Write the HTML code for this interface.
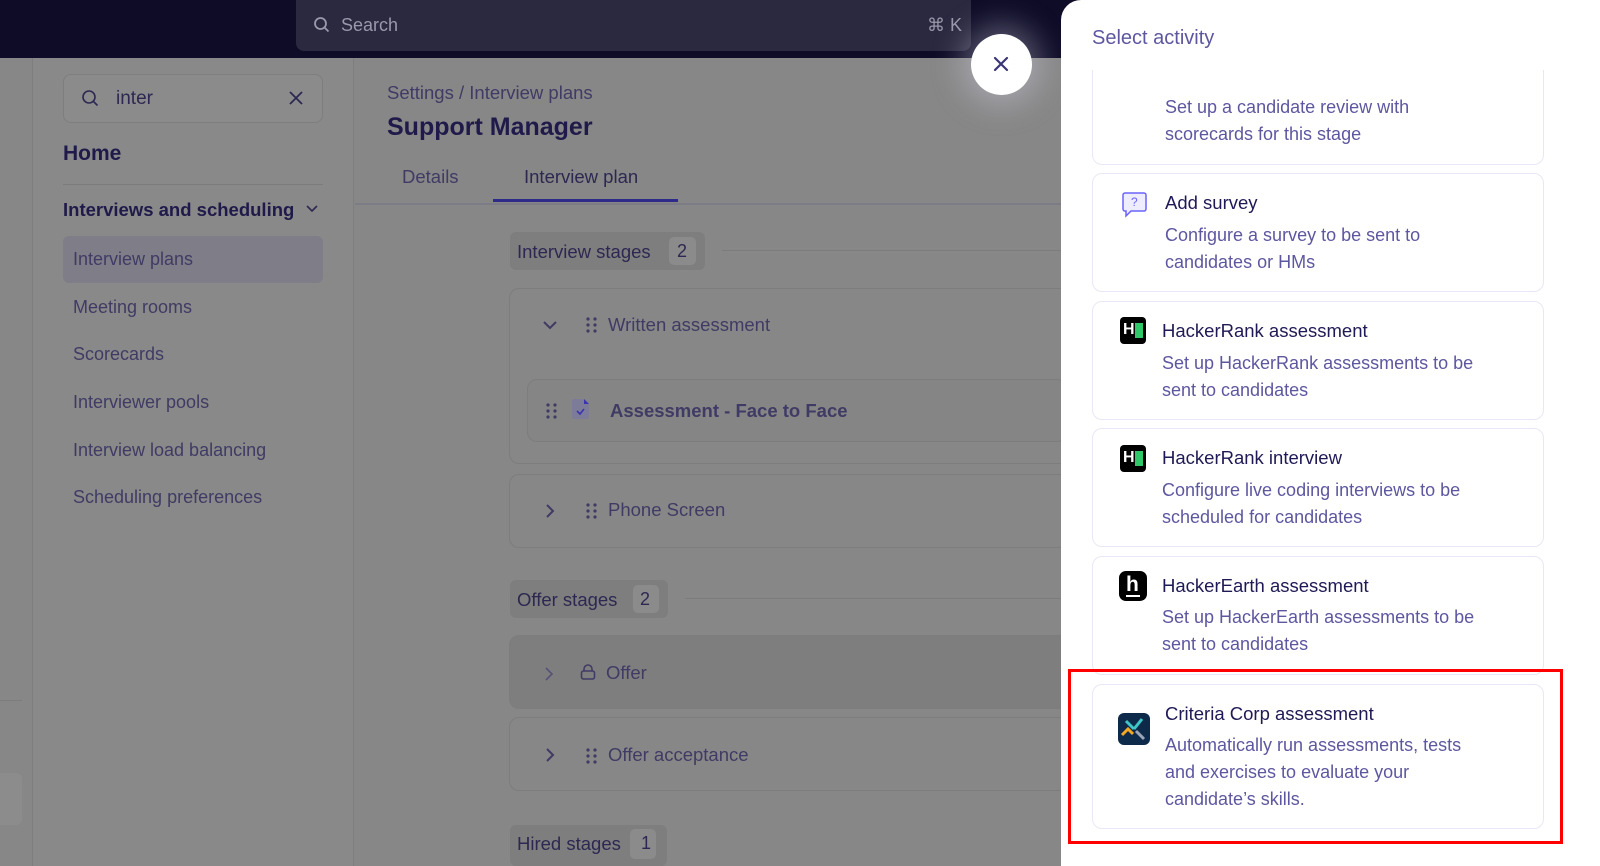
<!DOCTYPE html><html><head><style>
*{box-sizing:border-box;margin:0;padding:0}
body{width:1600px;height:866px;overflow:hidden;position:relative;background:#878787;font-family:"Liberation Sans",sans-serif}
.a{position:absolute}
.top{left:0;top:0;width:1600px;height:58px;background:#0e0c26}
.search{left:296px;top:0;width:675px;height:51px;background:#2b2940;border-radius:0 0 8px 8px;color:#9a98aa;font-size:18px}
.sb{left:32px;top:58px;width:322px;height:808px;background:#898989;border-left:1px solid #7e7e7e;border-right:1px solid #7e7e7e}
.txt{color:#2c2852}
.nav{left:73px;font-size:18px;color:#3f3b64}
.card{position:absolute;left:1092px;width:452px;background:#fff;border:1px solid #e9e7f6;border-radius:10px}
.t{position:absolute;font-size:18.5px;color:#1f1a55}
.d{position:absolute;font-size:18px;color:#5d57a0;line-height:27px}
.row{position:absolute;left:509px;width:560px;border:1px solid #7d7d7d;border-radius:10px}
</style></head><body>
<svg width="0" height="0" style="position:absolute"><defs>
<g id="dots" fill="#3f3b64"><circle cx="2" cy="2" r="1.6"/><circle cx="9" cy="2" r="1.6"/><circle cx="2" cy="8" r="1.6"/><circle cx="9" cy="8" r="1.6"/><circle cx="2" cy="14" r="1.6"/><circle cx="9" cy="14" r="1.6"/></g>
</defs></svg>
<div class="a top"></div>
<div class="a search"><svg class="a" style="left:17px;top:16px" width="18" height="18" viewBox="0 0 18 18"><circle cx="7.5" cy="7.5" r="5.5" fill="none" stroke="#9a98aa" stroke-width="1.8"/><path d="M11.5 11.5l4 4" stroke="#9a98aa" stroke-width="1.8"/></svg><span class="a" style="left:45px;top:15px">Search</span><span class="a" style="left:631px;top:15px">⌘ K</span></div>
<div class="a sb"></div>
<div class="a" style="left:63px;top:74px;width:260px;height:49px;border:1px solid #7e7e7e;border-radius:8px;background:#8b8b8b"></div>
<svg class="a" style="left:80px;top:88px" width="20" height="20"><circle cx="9" cy="9" r="6" fill="none" stroke="#2c2852" stroke-width="1.6"/><path d="M13.5 13.5l4 4" stroke="#2c2852" stroke-width="1.6"/></svg>
<span class="a txt" style="left:116px;top:88px;font-size:19px">inter</span>
<svg class="a" style="left:288px;top:90px" width="16" height="16"><path d="M2 2l12 12M14 2L2 14" stroke="#2c2852" stroke-width="1.8"/></svg>
<span class="a" style="left:63px;top:142px;font-size:21px;font-weight:bold;color:#1f1a4a">Home</span>
<div class="a" style="left:63px;top:184px;width:260px;height:1px;background:#7c7c7c"></div>
<span class="a" style="left:63px;top:199px;font-size:18.5px;font-weight:bold;color:#1f1a4a">Interviews and scheduling</span>
<svg class="a" style="left:306px;top:205px" width="12" height="8"><path d="M1 1l5 5 5-5" stroke="#2c2852" stroke-width="1.6" fill="none"/></svg>
<div class="a" style="left:63px;top:236px;width:260px;height:47px;background:#7f7e88;border-radius:6px"></div>
<span class="a nav" style="top:249px">Interview plans</span>
<span class="a nav" style="top:297px">Meeting rooms</span>
<span class="a nav" style="top:344px">Scorecards</span>
<span class="a nav" style="top:392px">Interviewer pools</span>
<span class="a nav" style="top:440px">Interview load balancing</span>
<span class="a nav" style="top:487px">Scheduling preferences</span>
<span class="a" style="left:387px;top:82px;font-size:18.5px;color:#3f3b64">Settings / Interview plans</span>
<span class="a" style="left:387px;top:113px;font-size:25px;font-weight:bold;color:#1f1a4a">Support Manager</span>
<span class="a" style="left:402px;top:166px;font-size:18.5px;color:#3f3b64">Details</span>
<span class="a" style="left:524px;top:166px;font-size:18.5px;color:#2c2852">Interview plan</span>
<div class="a" style="left:355px;top:203px;width:706px;height:2px;background:#7c7c86"></div>
<div class="a" style="left:493px;top:199px;width:185px;height:3px;background:#2e2a8a"></div>
<div class="a" style="left:510px;top:232px;width:195px;height:38px;background:#7e7e7e;border-radius:6px"></div>
<span class="a txt" style="left:517px;top:241px;font-size:18.5px">Interview stages</span>
<div class="a" style="left:669px;top:237px;width:27px;height:28px;background:#8b8b8b;border-radius:5px"></div><span class="a txt" style="left:677px;top:241px;font-size:18px">2</span>
<div class="a" style="left:722px;top:250px;width:340px;height:1px;background:#7c7c7c"></div>
<div class="row" style="top:288px;height:176px"></div>
<svg class="a" style="left:543px;top:321px" width="14" height="9"><path d="M1 1l6 6 6-6" stroke="#3f3b64" stroke-width="2" fill="none"/></svg>
<svg class="a" style="left:586px;top:317px" width="11" height="16"><use href="#dots"/></svg>
<span class="a" style="left:608px;top:314px;font-size:18.5px;color:#3f3b64">Written assessment</span>
<div class="a" style="left:527px;top:379px;width:540px;height:63px;border:1px solid #7d7d7d;border-radius:10px;background:#858585"></div>
<svg class="a" style="left:546px;top:403px" width="11" height="16"><use href="#dots"/></svg>
<svg class="a" style="left:571px;top:397px" width="20" height="24"><path d="M3 2h10l5 5v13a2 2 0 0 1-2 2H3a2 2 0 0 1-2-2V4a2 2 0 0 1 2-2z" fill="#7d7c98"/><path d="M13 2l5 5h-5z" fill="#3a34b0"/><path d="M6 14l3 3 4-5" stroke="#3a34b0" stroke-width="1.6" fill="none"/></svg>
<span class="a" style="left:610px;top:400px;font-size:18.5px;font-weight:bold;color:#3f3b64">Assessment - Face to Face</span>
<div class="row" style="top:474px;height:74px"></div>
<svg class="a" style="left:546px;top:504px" width="9" height="14"><path d="M1 1l6 6-6 6" stroke="#3f3b64" stroke-width="2" fill="none"/></svg>
<svg class="a" style="left:586px;top:503px" width="11" height="16"><use href="#dots"/></svg>
<span class="a" style="left:608px;top:499px;font-size:18.5px;color:#3f3b64">Phone Screen</span>
<div class="a" style="left:510px;top:580px;width:158px;height:38px;background:#7e7e7e;border-radius:6px"></div>
<span class="a txt" style="left:517px;top:589px;font-size:18.5px">Offer stages</span>
<div class="a" style="left:633px;top:585px;width:26px;height:28px;background:#8b8b8b;border-radius:5px"></div><span class="a txt" style="left:640px;top:589px;font-size:18px">2</span>
<div class="a" style="left:685px;top:598px;width:376px;height:1px;background:#7c7c7c"></div>
<div class="row" style="top:635px;height:74px;background:#7e7e7e"></div>
<svg class="a" style="left:545px;top:667px" width="9" height="14"><path d="M1 1l6 6-6 6" stroke="#55527a" stroke-width="1.6" fill="none"/></svg>
<svg class="a" style="left:580px;top:663px" width="16" height="18"><path d="M4 8V6a4 4 0 0 1 8 0v2" stroke="#3f3b64" stroke-width="1.6" fill="none"/><rect x="1.5" y="8" width="13" height="8" rx="2" stroke="#3f3b64" stroke-width="1.6" fill="none"/></svg>
<span class="a" style="left:606px;top:662px;font-size:18.5px;color:#3f3b64">Offer</span>
<div class="row" style="top:717px;height:74px"></div>
<svg class="a" style="left:546px;top:748px" width="9" height="14"><path d="M1 1l6 6-6 6" stroke="#3f3b64" stroke-width="2" fill="none"/></svg>
<svg class="a" style="left:586px;top:748px" width="11" height="16"><use href="#dots"/></svg>
<span class="a" style="left:608px;top:744px;font-size:18.5px;color:#3f3b64">Offer acceptance</span>
<div class="a" style="left:510px;top:825px;width:157px;height:41px;background:#7e7e7e;border-radius:6px"></div>
<span class="a txt" style="left:517px;top:833px;font-size:18.5px">Hired stages</span>
<div class="a" style="left:630px;top:829px;width:26px;height:30px;background:#8b8b8b;border-radius:5px"></div><span class="a txt" style="left:641px;top:833px;font-size:18px">1</span>
<div class="a" style="left:0;top:700px;width:22px;height:1px;background:#7c7c7c"></div>
<div class="a" style="left:0;top:773px;width:22px;height:52px;background:#8c8c8c;border-radius:0 6px 6px 0"></div>
<div class="a" style="left:971px;top:34px;width:61px;height:61px;border-radius:50%;background:#fff;box-shadow:0 0 30px 10px rgba(220,220,240,.35)"></div>
<svg class="a" style="left:992px;top:55px" width="18" height="18"><path d="M3 3l12 12M15 3L3 15" stroke="#3a3578" stroke-width="2.2" stroke-linecap="round"/></svg>
<div class="a" style="left:1061px;top:0;width:539px;height:866px;background:#fff;border-radius:20px 0 0 0"></div>
<span class="a" style="left:1092px;top:27px;font-size:20px;color:#5d57a0">Select activity</span>
<div class="card" style="top:70px;height:95px;border-top:none;border-radius:0 0 10px 10px"></div>
<div class="d" style="left:1165px;top:94px">Set up a candidate review with<br>scorecards for this stage</div>
<div class="card" style="top:173px;height:119px"></div>
<svg class="a" style="left:1121px;top:191px" width="27" height="28" viewBox="0 0 27 28"><path d="M4 2h19a2 2 0 0 1 2 2v14a2 2 0 0 1-2 2H10l-5 5v-5H4a2 2 0 0 1-2-2V4a2 2 0 0 1 2-2z" fill="#eeecff" stroke="#6b63ff" stroke-width="1.5"/><text x="10" y="15" font-size="12" fill="#6b63ff" font-family="Liberation Sans">?</text></svg>
<div class="t" style="left:1165px;top:192px">Add survey</div>
<div class="d" style="left:1165px;top:222px">Configure a survey to be sent to<br>candidates or HMs</div>
<div class="card" style="top:301px;height:119px"></div>
<div class="a" style="left:1120px;top:317px;width:26px;height:27px;background:#000;border-radius:4px"><span class="a" style="left:3px;top:4px;color:#fff;font-weight:bold;font-size:16px">H</span><div class="a" style="left:15px;top:6px;width:8px;height:15px;background:#2ec866"></div></div>
<div class="t" style="left:1162px;top:320px">HackerRank assessment</div>
<div class="d" style="left:1162px;top:350px">Set up HackerRank assessments to be<br>sent to candidates</div>
<div class="card" style="top:428px;height:119px"></div>
<div class="a" style="left:1120px;top:445px;width:26px;height:27px;background:#000;border-radius:4px"><span class="a" style="left:3px;top:4px;color:#fff;font-weight:bold;font-size:16px">H</span><div class="a" style="left:15px;top:6px;width:8px;height:15px;background:#2ec866"></div></div>
<div class="t" style="left:1162px;top:447px">HackerRank interview</div>
<div class="d" style="left:1162px;top:477px">Configure live coding interviews to be<br>scheduled for candidates</div>
<div class="card" style="top:556px;height:119px"></div>
<div class="a" style="left:1119px;top:571px;width:28px;height:30px;background:#000;border-radius:7px"><span class="a" style="left:7px;top:2px;color:#fff;font-weight:bold;font-size:21px">h</span><div class="a" style="left:7px;top:24px;width:14px;height:2px;background:#fff"></div></div>
<div class="t" style="left:1162px;top:575px">HackerEarth assessment</div>
<div class="d" style="left:1162px;top:604px">Set up HackerEarth assessments to be<br>sent to candidates</div>
<div class="card" style="top:684px;height:145px"></div>
<svg class="a" style="left:1118px;top:713px" width="32" height="32" viewBox="0 0 32 32"><rect width="32" height="32" rx="6" fill="#0e2a4a"/><path d="M8 8l8 8M24 6L16 16" stroke="#3fc6c8" stroke-width="3"/><path d="M4 22l6-6 5 5" stroke="#f5a623" stroke-width="3" fill="none"/><path d="M26 26l-8-8" stroke="#9aa5b5" stroke-width="3"/></svg>
<div class="t" style="left:1165px;top:703px">Criteria Corp assessment</div>
<div class="d" style="left:1165px;top:732px">Automatically run assessments, tests<br>and exercises to evaluate your<br>candidate’s skills.</div>
<div class="a" style="left:1068px;top:669px;width:495px;height:175px;border:3px solid #f00"></div>
</body></html>
